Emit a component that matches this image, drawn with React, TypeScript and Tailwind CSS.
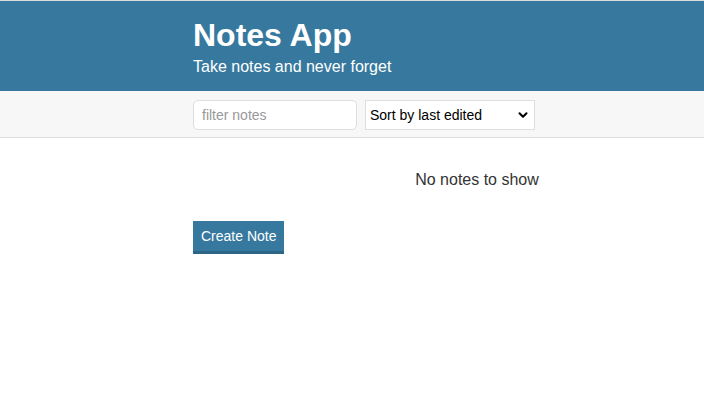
import { ChevronDown } from "lucide-react";

export default function App() {
  return (
    <div className="min-h-[419px] w-[704px] overflow-hidden bg-white font-['Liberation_Sans',Arial,sans-serif] text-[#333]">
      <header className="h-[91px] border-t border-[#dcdcdc] bg-[#37799e] pl-[193px] pt-[15px] text-white">
        <h1 className="text-[32px] font-bold leading-[38px]">Notes App</h1>
        <p className="mt-[3px] text-[16px] leading-[19px]">Take notes and never forget</p>
      </header>

      <div className="flex h-[47px] items-start gap-[8px] border-b border-[#dedede] bg-[#f7f7f7] pl-[193px] pt-[9px]">
        <input
          type="text"
          placeholder="filter notes"
          className="h-[30px] w-[164px] rounded-[5px] border border-[#dedede] bg-white px-2 text-[14px] text-[#333] placeholder:text-[#999] outline-none"
        />
        <div className="relative">
          <select className="h-[30px] w-[170px] appearance-none border border-[#dedede] bg-white pl-[4px] text-[14px] text-black outline-none">
            <option>Sort by last edited</option>
            <option>Sort by recently created</option>
            <option>Sort alphabetically</option>
          </select>
          <ChevronDown
            size={14}
            strokeWidth={3.5}
            className="pointer-events-none absolute right-[5px] top-[8px] text-black"
          />
        </div>
      </div>

      <main className="pl-[193px] pt-[32px]">
        <div className="w-[568px] text-center text-[16px] leading-[19px]">No notes to show</div>
        <button className="mt-[32px] h-[33px] border-b-[3px] border-[#2c6586] bg-[#37799e] px-2 text-[14px] text-white">
          Create Note
        </button>
      </main>
    </div>
  );
}
